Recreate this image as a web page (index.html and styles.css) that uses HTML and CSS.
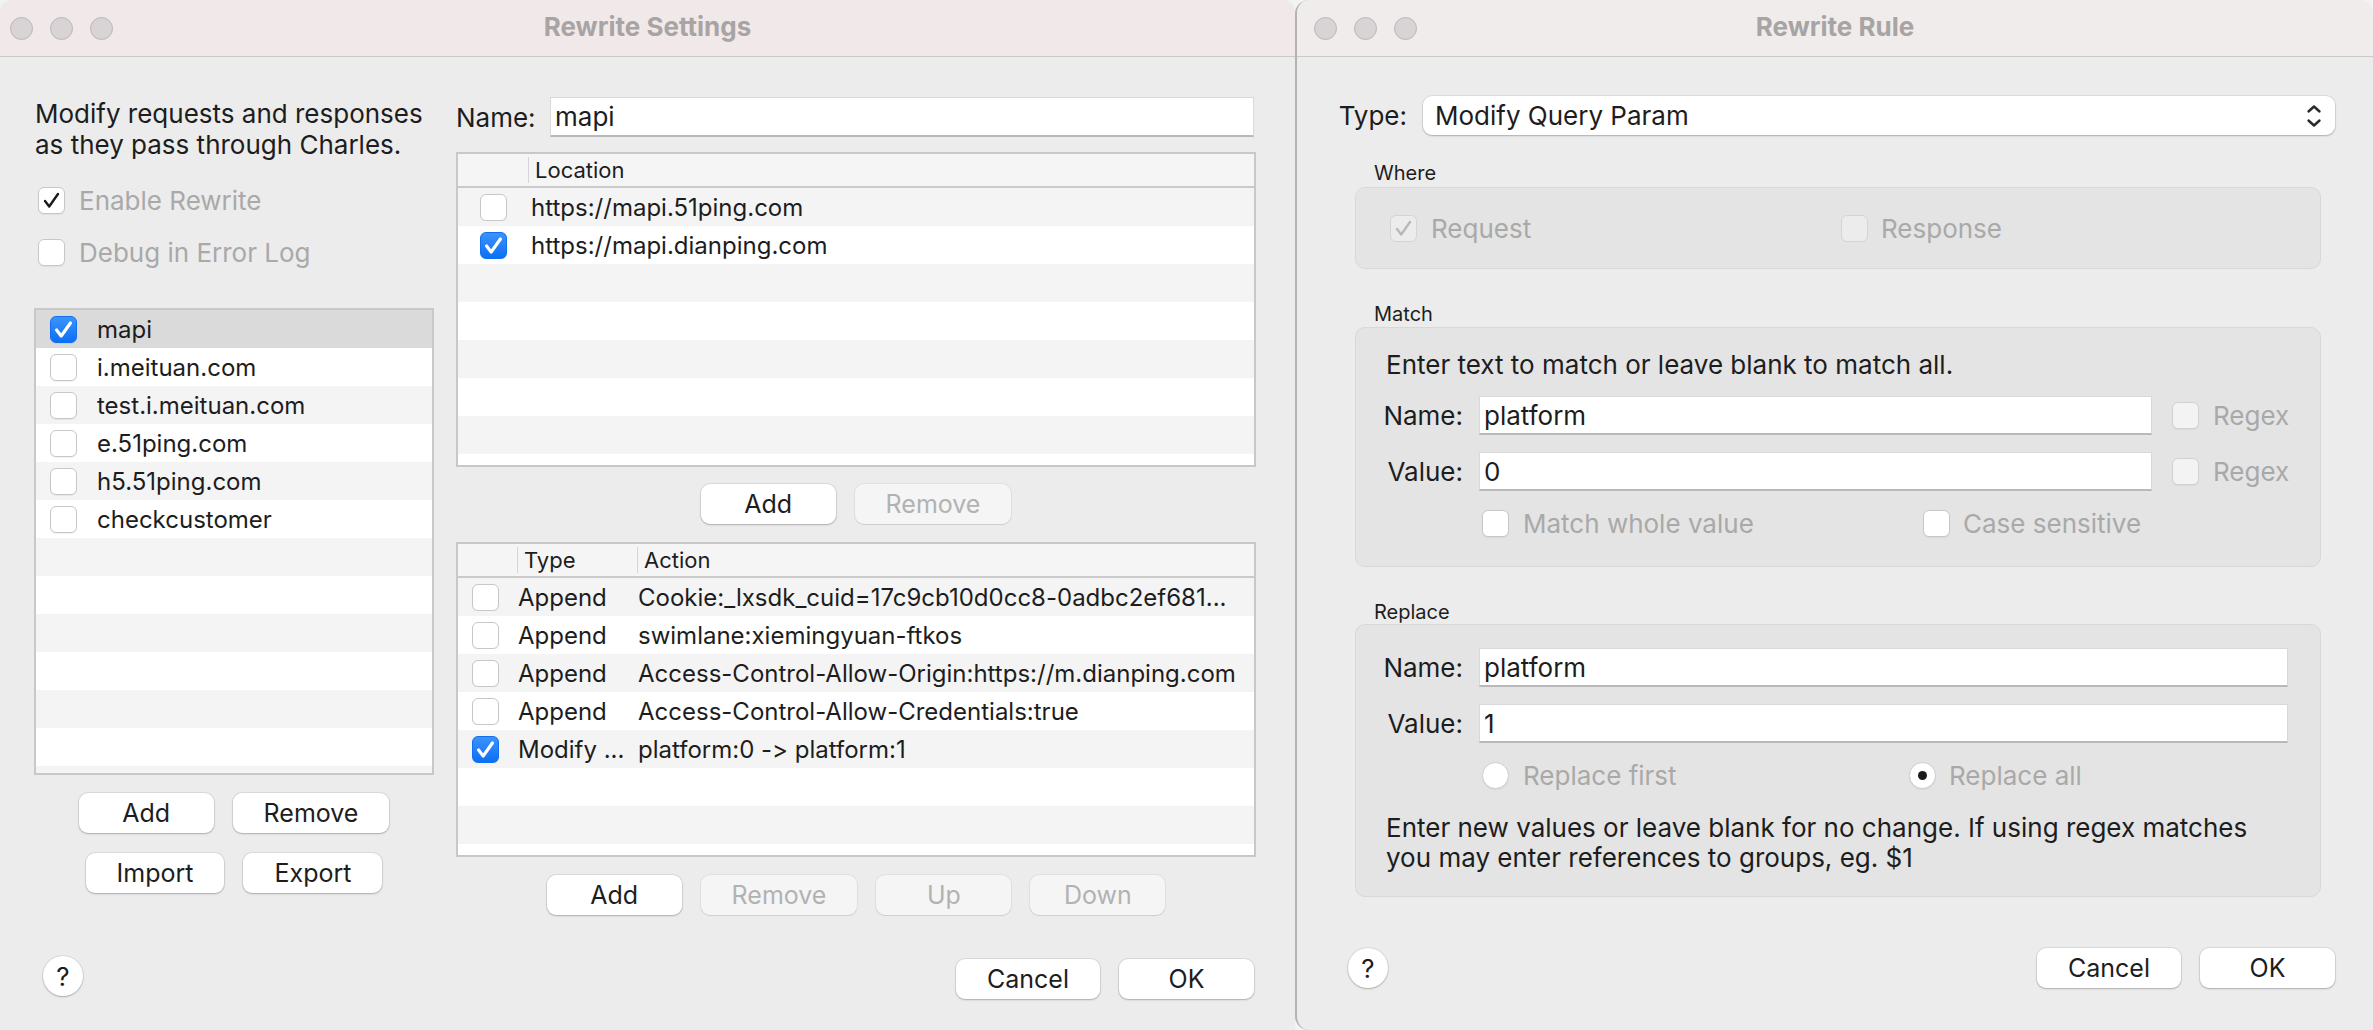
FILE: index.html
```html
<!DOCTYPE html>
<html>
<head>
<meta charset="utf-8">
<title>Rewrite Settings</title>
<link rel="stylesheet" href="styles.css">
</head>
<body>
<div class="desktop">
  <section class="window win-settings">
    <div class="titlebar tb-pink">
      <div class="lights"><i></i><i></i><i></i></div>
      <div class="wtitle">Rewrite Settings</div>
      <div></div>
    </div>
    <div class="settings-body">
      <div class="col-left">
        <p class="desc">Modify requests and responses<br>as they pass through Charles.</p>
        <div class="opt opt-enable">
          <span class="cb"><svg class="ck" viewBox="0 0 27 27"><path d="M6.5 14 L11 20 L20.5 6.5" class="ck-dark"/></svg></span>
          <span class="dim">Enable Rewrite</span>
        </div>
        <div class="opt opt-debug">
          <span class="cb"></span>
          <span class="dim">Debug in Error Log</span>
        </div>
        <div class="list">
          <div class="lrow sel"><span class="cb on"><svg class="ck" viewBox="0 0 27 27"><path d="M6 14 L11 20.5 L21 6.5" class="ck-white"/></svg></span><span class="ltxt">mapi</span></div>
          <div class="lrow"><span class="cb"></span><span class="ltxt">i.meituan.com</span></div>
          <div class="lrow"><span class="cb"></span><span class="ltxt">test.i.meituan.com</span></div>
          <div class="lrow"><span class="cb"></span><span class="ltxt">e.51ping.com</span></div>
          <div class="lrow"><span class="cb"></span><span class="ltxt">h5.51ping.com</span></div>
          <div class="lrow"><span class="cb"></span><span class="ltxt">checkcustomer</span></div>
          <div class="lrow"></div>
          <div class="lrow"></div>
          <div class="lrow"></div>
          <div class="lrow"></div>
          <div class="lrow"></div>
          <div class="lrow"></div>
          <div class="lrow"></div>
        </div>
        <div class="btns btns-l1"><button class="btn">Add</button><button class="btn">Remove</button></div>
        <div class="btns btns-l2"><button class="btn">Import</button><button class="btn">Export</button></div>
        <button class="help help-l">?</button>
      </div>

      <div class="col-main">
        <div class="name-row">
          <span class="name-label">Name:</span>
          <div class="field f-name">mapi</div>
        </div>

        <div class="tbl loc">
          <div class="thead">
            <div class="th th-c1"></div>
            <div class="th th-sep">Location</div>
          </div>
          <div class="trow"><div class="tc tc-l1"><span class="cb"></span></div><div class="tc tc-loc">https://mapi.51ping.com</div></div>
          <div class="trow"><div class="tc tc-l1"><span class="cb on"><svg class="ck" viewBox="0 0 27 27"><path d="M6 14 L11 20.5 L21 6.5" class="ck-white"/></svg></span></div><div class="tc tc-loc">https://mapi.dianping.com</div></div>
          <div class="trow"></div>
          <div class="trow"></div>
          <div class="trow"></div>
          <div class="trow"></div>
          <div class="trow"></div>
          <div class="trow"></div>
        </div>

        <div class="btns btns-m1"><button class="btn">Add</button><button class="btn dis">Remove</button></div>

        <div class="tbl rules">
          <div class="thead">
            <div class="th th-r1"></div>
            <div class="th th-sep th-type">Type</div>
            <div class="th th-sep th-action">Action</div>
          </div>
          <div class="trow"><div class="tc tc-r1"><span class="cb"></span></div><div class="tc tc-type">Append</div><div class="tc tc-action">Cookie:_lxsdk_cuid=17c9cb10d0cc8-0adbc2ef681...</div></div>
          <div class="trow"><div class="tc tc-r1"><span class="cb"></span></div><div class="tc tc-type">Append</div><div class="tc tc-action">swimlane:xiemingyuan-ftkos</div></div>
          <div class="trow"><div class="tc tc-r1"><span class="cb"></span></div><div class="tc tc-type">Append</div><div class="tc tc-action">Access-Control-Allow-Origin:https://m.dianping.com</div></div>
          <div class="trow"><div class="tc tc-r1"><span class="cb"></span></div><div class="tc tc-type">Append</div><div class="tc tc-action">Access-Control-Allow-Credentials:true</div></div>
          <div class="trow"><div class="tc tc-r1"><span class="cb on"><svg class="ck" viewBox="0 0 27 27"><path d="M6 14 L11 20.5 L21 6.5" class="ck-white"/></svg></span></div><div class="tc tc-type">Modify ...</div><div class="tc tc-action">platform:0 -&gt; platform:1</div></div>
          <div class="trow"></div>
          <div class="trow"></div>
          <div class="trow"></div>
          <div class="trow"></div>
        </div>

        <div class="btns btns-m2"><button class="btn">Add</button><button class="btn dis">Remove</button><button class="btn dis">Up</button><button class="btn dis">Down</button></div>

        <div class="btns btns-end"><button class="btn">Cancel</button><button class="btn">OK</button></div>
      </div>
    </div>
  </section>

  <section class="window win-rule">
    <div class="titlebar tb-grey">
      <div class="lights"><i></i><i></i><i></i></div>
      <div class="wtitle">Rewrite Rule</div>
      <div></div>
    </div>
    <div class="rule-body">
      <div class="type-row">
        <span class="type-label">Type:</span>
        <div class="select">
          <span>Modify Query Param</span>
          <svg class="chev" viewBox="0 0 16 24"><path d="M2.5 7.5 L8 2.5 L13.5 7.5 M2.5 16.5 L8 21.5 L13.5 16.5"/></svg>
        </div>
      </div>

      <div class="glabel g-where">Where</div>
      <div class="gbox where-box">
        <div class="oitem w-req"><span class="cb cb-dis"><svg class="ck" viewBox="0 0 27 27"><path d="M6.5 14 L11 20 L20.5 6.5" class="ck-grey"/></svg></span><span class="dim olbl">Request</span></div>
        <div class="oitem"><span class="cb cb-dis"></span><span class="dim olbl2">Response</span></div>
      </div>

      <div class="glabel g-match">Match</div>
      <div class="gbox match-box">
        <p class="gtext">Enter text to match or leave blank to match all.</p>
        <div class="frow frow-1">
          <span class="flabel">Name:</span>
          <div class="field f-short">platform</div>
          <span class="cb cb-light rx-cb"></span><span class="dim rx-lbl">Regex</span>
        </div>
        <div class="frow frow-2">
          <span class="flabel">Value:</span>
          <div class="field f-short">0</div>
          <span class="cb cb-light rx-cb"></span><span class="dim rx-lbl">Regex</span>
        </div>
        <div class="orow">
          <div class="oitem o-first"><span class="cb"></span><span class="dim olbl">Match whole value</span></div>
          <div class="oitem"><span class="cb"></span><span class="dim olbl2">Case sensitive</span></div>
        </div>
      </div>

      <div class="glabel g-replace">Replace</div>
      <div class="gbox replace-box">
        <div class="frow">
          <span class="flabel">Name:</span>
          <div class="field f-long">platform</div>
        </div>
        <div class="frow frow-2">
          <span class="flabel">Value:</span>
          <div class="field f-long">1</div>
        </div>
        <div class="orow">
          <div class="oitem r-first"><span class="radio"></span><span class="dim olbl">Replace first</span></div>
          <div class="oitem"><span class="radio on"></span><span class="dim olbl2">Replace all</span></div>
        </div>
        <p class="gtext help-text">Enter new values or leave blank for no change. If using regex matches<br>you may enter references to groups, eg. $1</p>
      </div>

      <div class="bottom-row">
        <button class="help">?</button>
        <div class="btns btns-r"><button class="btn">Cancel</button><button class="btn">OK</button></div>
      </div>
    </div>
  </section>
</div>
</body>
</html>
```

FILE: styles.css
```css
* { box-sizing: border-box; }
html, body { margin: 0; padding: 0; }
body {
  width: 2373px;
  height: 1030px;
  overflow: hidden;
  background: #f3f3f3;
  font-family: Inter, "Liberation Sans", sans-serif;
  font-feature-settings: "calt" 0, "liga" 0;
  font-variant-ligatures: none;
  color: #1d1d1d;
  --lbl: 26px;
  --tfs: 24px;
  --bfs: 25px;
}
p { margin: 0; }
.desktop { display: flex; height: 1030px; }

.window {
  background: #ececec;
  height: 1030px;
  display: flex;
  flex-direction: column;
  overflow: hidden;
}
.win-settings { width: 1295px; flex: none; border-radius: 12px 12px 0 0; }
.win-rule { flex: 1; border-left: 2px solid #b3b3b3; border-radius: 14px 14px 0 14px; }

/* title bar */
.titlebar {
  height: 57px;
  flex: none;
  display: grid;
  grid-template-columns: 1fr auto 1fr;
  align-items: center;
  border-bottom: 1px solid #cdc8c8;
}
.tb-pink { background: #f1e8e9; }
.tb-grey { background: #efeceb; }
.lights { display: flex; gap: 17px; padding-left: 10px; }
.win-rule .lights { padding-left: 17px; }
.lights i {
  width: 23px; height: 23px; border-radius: 50%;
  background: #d8d3d4; border: 1px solid #bcb6b7;
}
.wtitle {
  font-weight: 700;
  font-size: 26px;
  color: #a8a4a4;
  padding-bottom: 3px;
  white-space: nowrap;
}

/* checkbox */
.cb {
  width: 27px; height: 27px; flex: none;
  border-radius: 6px;
  background: #fff;
  border: 1px solid #c7c7c7;
  box-shadow: 0 1px 1px rgba(0,0,0,0.06);
  display: inline-flex; align-items: center; justify-content: center;
}
.cb.on { background: linear-gradient(#3b93fc, #0c6ff6); border-color: #1070ee; }
.cb-dis { background: #ececec; border-color: #d4d4d4; box-shadow: none; }
.cb-light { background: #f3f3f3; border-color: #d2d2d2; }
.ck { width: 27px; height: 27px; }
.ck path { fill: none; stroke-linecap: round; stroke-linejoin: round; }
.ck-white { stroke: #fff; stroke-width: 3.4; }
.ck-dark { stroke: #1b1b1b; stroke-width: 2.6; }
.ck-grey { stroke: #b9b9b9; stroke-width: 2.6; }

.radio {
  width: 27px; height: 27px; flex: none; border-radius: 50%;
  background: #fff; border: 1px solid #cdcdcd;
  box-shadow: 0 1px 1px rgba(0,0,0,0.06);
  display: inline-flex; align-items: center; justify-content: center;
}
.radio.on::after { content: ""; width: 9px; height: 9px; border-radius: 50%; background: #1b1b1b; }

.dim { color: #a9a9a9; }

/* buttons */
.btn {
  height: 40px;
  min-width: 135px;
  padding: 0 31px;
  background: #fff;
  border: none;
  border-radius: 9px;
  box-shadow: 0 0 0 1px rgba(0,0,0,0.07), 0 1px 2px rgba(0,0,0,0.22);
  font-family: inherit;
  font-feature-settings: inherit;
  font-size: var(--bfs);
  color: #1d1d1d;
}
.btn.dis { background: #f5f5f5; color: #b2b2b2; box-shadow: 0 0 0 1px rgba(0,0,0,0.05), 0 1px 1px rgba(0,0,0,0.08); }
.btns { display: flex; gap: 19px; justify-content: center; }
.help {
  width: 40px; height: 40px; border-radius: 50%;
  background: #fff; border: none;
  box-shadow: 0 0 0 1px rgba(0,0,0,0.07), 0 1px 2px rgba(0,0,0,0.22);
  font-family: inherit; font-size: 26px; color: #1d1d1d;
  padding: 0;
}

/* left window */
.settings-body { flex: 1; display: flex; gap: 22px; padding: 40px 0 0 34px; }
.col-left { width: 400px; flex: none; display: flex; flex-direction: column; align-items: flex-start; }
.col-main { width: 800px; flex: none; display: flex; flex-direction: column; }

.desc { font-size: var(--lbl); line-height: 31px; margin: 1px 0 0 1px; white-space: nowrap; }
.opt { height: 40px; display: flex; align-items: center; margin-left: 4px; font-size: var(--lbl); }
.opt .cb { margin-right: 14px; }
.opt-enable { margin-top: 20px; }
.opt-debug { margin-top: 12px; }

.list {
  margin-top: 36px;
  width: 400px; height: 467px;
  border: 2px solid #c8c8c8;
  background: #fff;
  overflow: hidden;
}
.lrow { height: 38px; display: flex; align-items: center; padding-left: 14px; font-size: var(--tfs); white-space: nowrap; }
.lrow:nth-child(odd) { background: #f4f4f4; }
.lrow.sel { background: #dadada; }
.ltxt { margin-left: 20px; }

.btns-l1 { margin-top: 18px; width: 400px; }
.btns-l2 { margin-top: 20px; width: 400px; }
.help-l { margin-top: 63px; margin-left: 9px; }

.name-row { height: 40px; display: flex; align-items: center; font-size: var(--lbl); }
.name-label { width: 94px; flex: none; }
.field {
  height: 40px;
  background: #fff;
  border: 1px solid #d9d9d9;
  border-bottom: 2px solid #b9b9b9;
  display: flex; align-items: center;
  padding-left: 4px;
  font-size: var(--lbl);
  white-space: nowrap;
}
.f-name { width: 704px; }

.tbl { border: 2px solid #c8c8c8; background: #fff; overflow: hidden; font-size: var(--tfs); }
.loc { margin-top: 15px; height: 315px; }
.rules { margin-top: 18px; height: 315px; }
.thead { height: 34px; display: flex; align-items: center; background: #f5f5f5; border-bottom: 2px solid #cacaca; font-size: 22px; }
.th { height: 26px; display: flex; align-items: center; }
.th-sep { border-left: 1px solid #d5d5d5; padding-left: 6px; }
.th-c1 { width: 70px; }
.th-r1 { width: 59px; }
.th-type { width: 120px; }
.trow { height: 38px; display: flex; align-items: center; white-space: nowrap; }
.trow:nth-child(even) { background: #f4f4f4; }
.tc { overflow: hidden; }
.tc-l1 { width: 70px; display: flex; justify-content: center; }
.tc-loc { padding-left: 3px; }
.tc-r1 { width: 59px; display: flex; justify-content: center; padding-right: 4px; }
.tc-type { width: 120px; padding-left: 1px; }
.tc-action { flex: 1; padding-left: 1px; }

.btns-m1 { margin-top: 17px; }
.btns-m2 { margin-top: 18px; }
.btns-end { margin-top: 44px; justify-content: flex-end; padding-right: 2px; }

/* right window */
.rule-body { flex: 1; display: flex; flex-direction: column; padding-top: 39px; }
.type-row { display: flex; align-items: center; height: 39px; font-size: var(--lbl); }
.type-label { width: 110px; text-align: right; margin-right: 16px; }
.select {
  width: 912px; height: 39px;
  background: #fff;
  border-radius: 9px;
  box-shadow: 0 0 0 1px rgba(0,0,0,0.06), 0 1px 2px rgba(0,0,0,0.22);
  display: flex; align-items: center; justify-content: space-between;
  padding: 0 13px 0 12px;
}
.chev { width: 16px; height: 24px; }
.chev path { fill: none; stroke: #2a2a2a; stroke-width: 2.4; stroke-linecap: round; stroke-linejoin: round; }

.glabel { font-size: 20px; line-height: 24px; margin-left: 77px; }
.g-where { margin-top: 26px; margin-bottom: 2px; }
.g-match { margin-top: 33px; margin-bottom: 1px; }
.g-replace { margin-top: 33px; }

.gbox {
  margin-left: 58px;
  width: 966px;
  background: #e4e4e4;
  border: 1px solid #d8d8d8;
  border-radius: 10px;
  font-size: var(--lbl);
}
.where-box { height: 82px; display: flex; align-items: center; padding-left: 34px; }
.w-req { width: 451px; }
.oitem { display: flex; align-items: center; }
.olbl { margin-left: 14px; }
.olbl2 { margin-left: 13px; }

.match-box { height: 240px; padding-top: 21px; }
.replace-box { height: 273px; padding-top: 23px; }
.gtext { margin-left: 30px; line-height: 31px; white-space: nowrap; }
.frow { display: flex; align-items: center; height: 39px; }
.frow-1 { margin-top: 16px; }
.frow-2 { margin-top: 17px; }
.flabel { width: 107px; text-align: right; margin-right: 16px; }
.frow .field { height: 39px; }
.f-short { width: 673px; }
.f-long { width: 809px; }
.rx-cb { margin-left: 20px; }
.rx-lbl { margin-left: 14px; }
.orow { display: flex; align-items: center; height: 27px; margin-top: 19px; padding-left: 126px; }
.o-first { width: 441px; }
.r-first { width: 427px; }
.help-text { margin-top: 24px; line-height: 30px; }

.bottom-row {
  display: flex; align-items: center; justify-content: space-between;
  height: 40px; margin-top: 51px; padding: 0 38px 0 51px;
}
```
